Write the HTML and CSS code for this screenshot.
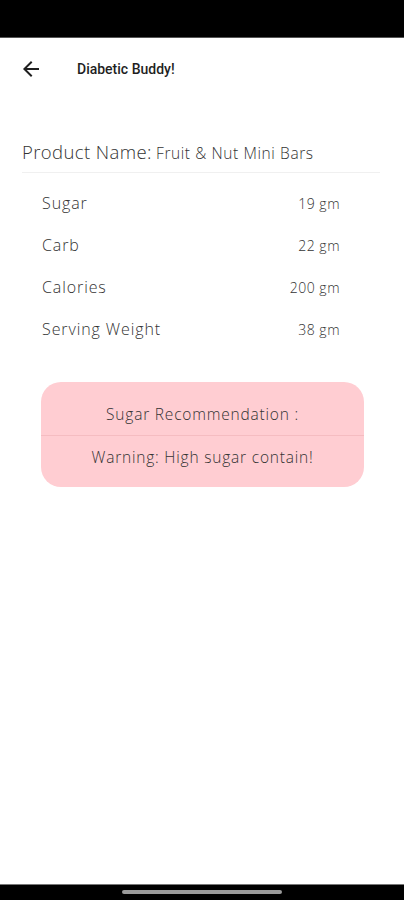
FILE: index.html
```html
<!DOCTYPE html>
<html lang="en">
<head>
    <meta charset="UTF-8">
    <meta name="viewport" content="width=device-width, initial-scale=1.0">
    <title>Diabetic Buddy!</title>
    <link rel="stylesheet" href="styles.css">
</head>
<body>
    <div class="status-bar"></div>

    <div class="app-bar">
        <svg class="back" width="24" height="24" viewBox="0 0 24 24">
            <path d="M20 11H7.83l5.59-5.59L12 4l-8 8 8 8 1.41-1.41L7.83 13H20v-2z" fill="#1f1f1f"/>
        </svg>
        <span class="title">Diabetic Buddy!</span>
    </div>

    <div class="content">
        <div class="product">
            <span class="product-label">Product Name:</span>
            <span class="product-name">Fruit &amp; Nut Mini Bars</span>
        </div>

        <div class="facts">
            <div class="fact"><span>Sugar</span><span class="value">19 gm</span></div>
            <div class="fact"><span>Carb</span><span class="value">22 gm</span></div>
            <div class="fact"><span>Calories</span><span class="value">200 gm</span></div>
            <div class="fact"><span>Serving Weight</span><span class="value">38 gm</span></div>
        </div>

        <div class="recommend">
            <div class="rec-title">Sugar Recommendation :</div>
            <div class="rec-text">Warning: High sugar contain!</div>
        </div>
    </div>

    <div class="nav-bar"><div class="handle"></div></div>
</body>
</html>
```

FILE: styles.css
```css
* {
    margin: 0;
    padding: 0;
    box-sizing: border-box;
}

body {
    width: 404px;
    height: 900px;
    background: white;
    font-family: 'Open Sans', 'Noto Sans', sans-serif;
    color: #333;
    display: flex;
    flex-direction: column;
}

.status-bar {
    height: 38px;
    background: black;
    border-bottom: 1px solid #555;
}

.app-bar {
    height: 62px;
    display: flex;
    align-items: center;
    padding-left: 19px;
}

.title {
    margin-left: 34px;
    font-family: 'Roboto', sans-serif;
    font-weight: 500;
    font-size: 14px;
    color: #1f1f1f;
}

.content {
    flex: 1;
    padding: 39px 22px 0 22px;
}

.product {
    padding-bottom: 8px;
    border-bottom: 1px solid #f0f0f0;
    margin-right: 2px;
}

.product-label {
    font-size: 18.5px;
    font-weight: 300;
    letter-spacing: 0.4px;
}

.product-name {
    font-size: 15.5px;
    font-weight: 300;
    letter-spacing: 0.6px;
}

.facts {
    padding: 9px 42px 0 20px;
}

.fact {
    height: 42px;
    display: flex;
    justify-content: space-between;
    align-items: center;
    font-size: 16px;
    font-weight: 300;
    letter-spacing: 0.9px;
}

.fact .value {
    font-size: 14px;
    letter-spacing: 0.5px;
}

.recommend {
    margin: 32px 18px 0 19px;
    background: #ffcdd2;
    border-radius: 20px;
    text-align: center;
    font-size: 15.5px;
    font-weight: 300;
    letter-spacing: 0.8px;
}

.rec-title {
    height: 54px;
    padding-top: 10px;
    line-height: 44px;
    border-bottom: 1px solid #f5bcc1;
}

.rec-text {
    height: 51px;
    line-height: 42px;
}

.nav-bar {
    height: 16px;
    background: black;
    border-top: 1px solid #777;
    display: flex;
    justify-content: center;
    padding-top: 5px;
}

.handle {
    width: 160px;
    height: 4px;
    border-radius: 2px;
    background: #9a9a9a;
}
```
